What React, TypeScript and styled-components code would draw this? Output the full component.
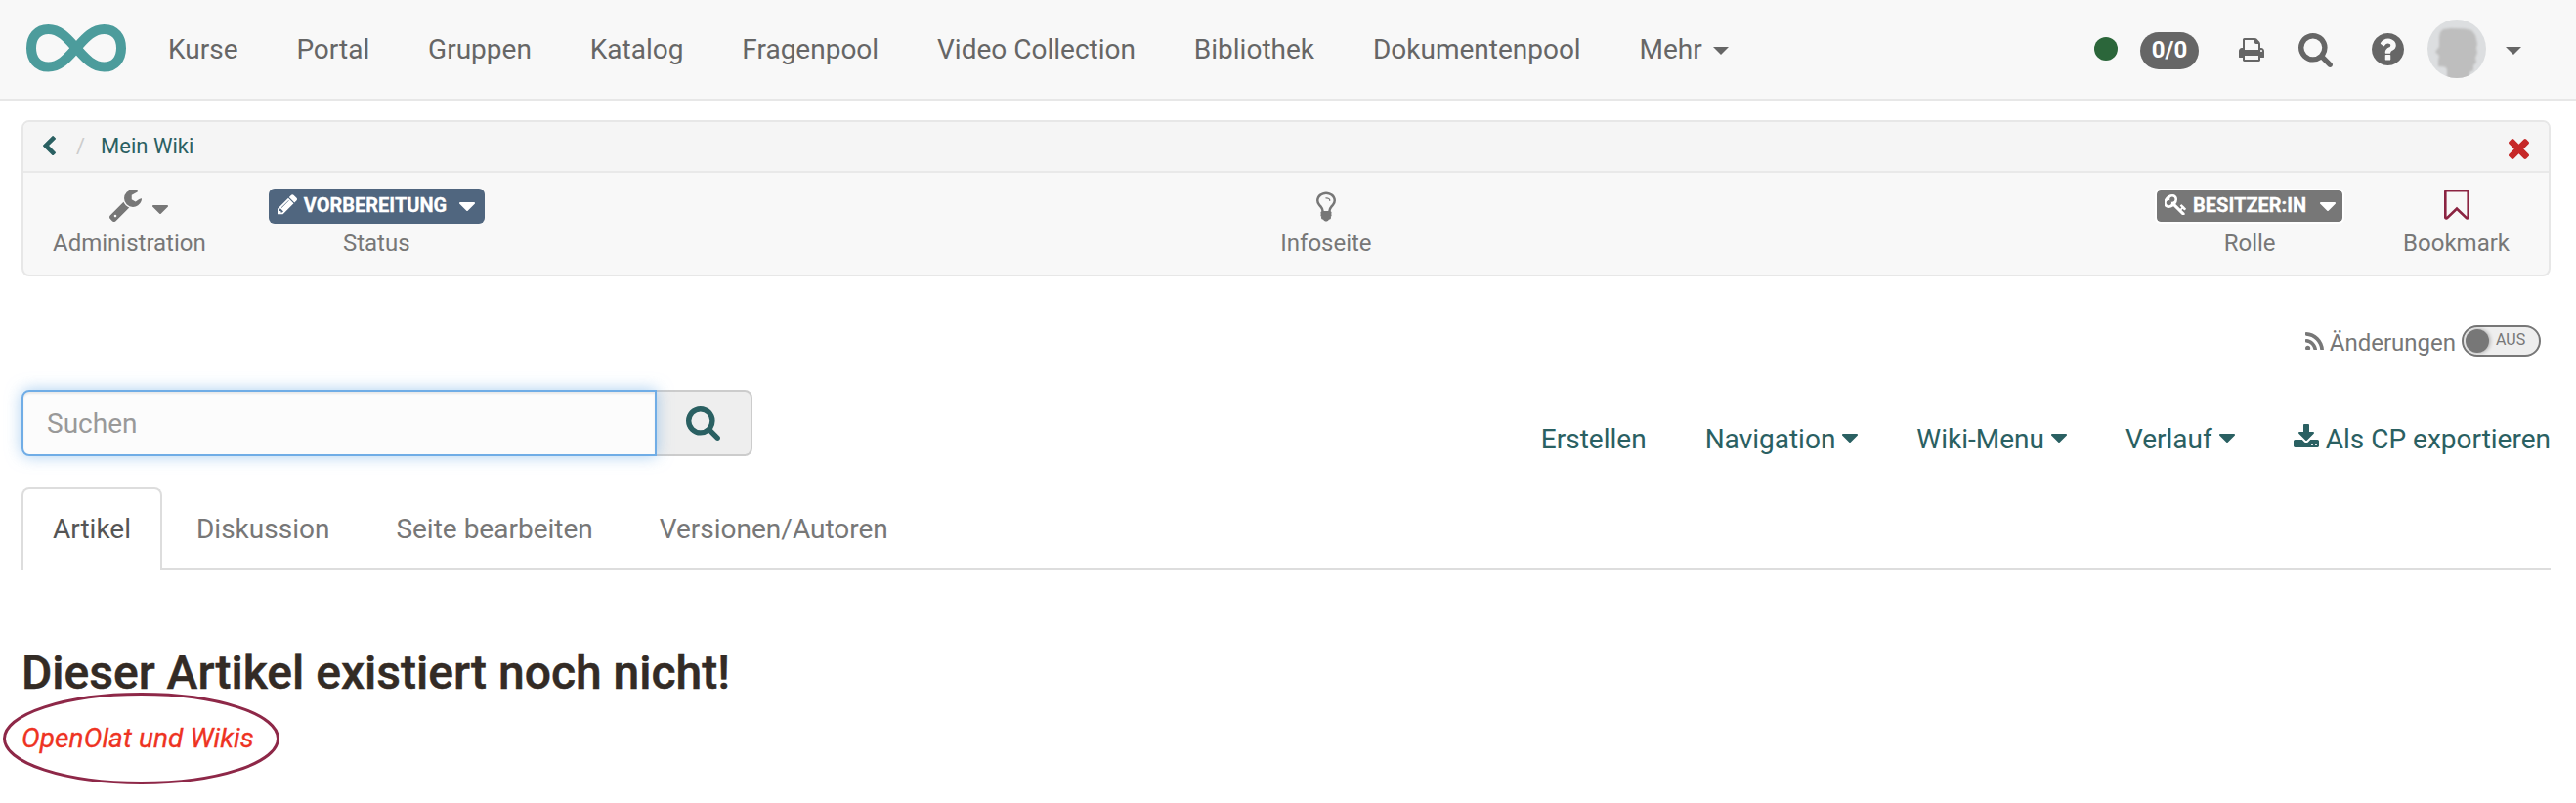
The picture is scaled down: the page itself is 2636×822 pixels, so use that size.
import React from 'react';
import styled, { createGlobalStyle } from 'styled-components';

const Global = createGlobalStyle`
  * { box-sizing: border-box; }
  body { margin: 0; background: #fff; font-family: Roboto, "Liberation Sans", sans-serif; }
`;

const PATHS = {
  search: 'M1216 832q0-185-131.5-316.5t-316.5-131.5-316.5 131.5-131.5 316.5 131.5 316.5 316.5 131.5 316.5-131.5 131.5-316.5zm512 832q0 52-38 90t-90 38q-54 0-90-38l-343-342q-179 124-399 124-143 0-273.5-55.5t-225-150-150-225-55.5-273.5 55.5-273.5 150-225 225-150 273.5-55.5 273.5 55.5 225 150 150 225 55.5 273.5q0 220-124 399l343 343q37 37 37 90z',
  help: 'M1024 1376v-192q0-14-9-23t-23-9h-192q-14 0-23 9t-9 23v192q0 14 9 23t23 9h192q14 0 23-9t9-23zm256-672q0-88-55.5-163t-138.5-116-170-41q-243 0-371 213-15 24 8 42l132 100q7 6 19 6 16 0 25-12 53-68 86-92 34-24 86-24 48 0 85.5 26t37.5 59q0 38-20 61t-68 45q-63 28-115.5 86.5t-52.5 125.5v36q0 14 9 23t23 9h192q14 0 23-9t9-23q0-19 21.5-49.5t54.5-49.5q32-18 49-28.5t46-35 44.5-48 28-60.5 12.5-81zm384 192q0 209-103 385.5t-279.5 279.5-385.5 103-385.5-103-279.5-279.5-103-385.5 103-385.5 279.5-279.5 385.5-103 385.5 103 279.5 279.5 103 385.5z',
  print: 'M448 1536h896v-256h-896v256zm0-640h896v-384h-160q-40 0-68-28t-28-68v-160h-640v640zm1152 64q0-26-19-45t-45-19-45 19-19 45 19 45 45 19 45-19 19-45zm128 0v416q0 13-9.5 22.5t-22.5 9.5h-224v160q0 40-28 68t-68 28h-960q-40 0-68-28t-28-68v-160h-224q-13 0-22.5-9.5t-9.5-22.5v-416q0-79 56.5-135.5t135.5-56.5h64v-544q0-40 28-68t68-28h672q40 0 88 20t76 48l152 152q28 28 48 76t20 88v256h64q79 0 135.5 56.5t56.5 135.5z',
  times: 'M1490 1322q0 40-28 68l-136 136q-28 28-68 28t-68-28l-294-294-294 294q-28 28-68 28t-68-28l-136-136q-28-28-28-68t28-68l294-294-294-294q-28-28-28-68t28-68l136-136q28-28 68-28t68 28l294 294 294-294q28-28 68-28t68 28l136 136q28 28 28 68t-28 68l-294 294 294 294q28 28 28 68z',
  wrench: 'M448 1472q0-26-19-45t-45-19-45 19-19 45 19 45 45 19 45-19 19-45zm644-420l-682 682q-37 37-90 37-52 0-91-37l-106-108q-38-36-38-90 0-53 38-91l681-681q39 98 114.5 173.5t173.5 114.5zm634-435q0 39-23 106-47 134-164.5 217.5t-258.5 83.5q-185 0-316.5-131.5t-131.5-316.5 131.5-316.5 316.5-131.5q58 0 121.5 16.5t107.5 46.5q16 11 16 28t-16 28l-293 169v224l193 107q5-3 79-48.5t135.5-81 70.5-35.5q15 0 23.5 10t8.5 25z',
  pencil: 'M491 1536l91-91-235-235-91 91v107h128v128h107zm523-928q0-22-22-22-10 0-17 7l-542 542q-7 7-7 17 0 22 22 22 10 0 17-7l542-542q7-7 7-17zm-54-192l416 416-832 832h-416v-416zm683 96q0 53-37 90l-166 166-416-416 166-165q36-38 90-38 53 0 91 38l235 234q37 39 37 91z',
  key: 'M832 512q0-80-56-136t-136-56-136 56-56 136q0 42 19 83-41-19-83-19-80 0-136 56t-56 136 56 136 136 56 136-56 56-136q0-42-19-83 41 19 83 19 80 0 136-56t56-136zm851 704q0 17-49 66t-66 49q-9 0-28.5-16t-36.5-33-38.5-40-24.5-26l-96 96 220 220q28 28 28 68 0 42-39 81t-81 39q-40 0-68-28l-671-671q-176 131-365 131-163 0-265.5-102.5t-102.5-265.5q0-160 95-313t248-248 313-95q163 0 265.5 102.5t102.5 265.5q0 189-131 365l355 355 96-96q-3-3-26-24.5t-40-38.5-33-36.5-16-28.5q0-17 49-66t66-49q13 0 23 10 6 6 46 44.5t82 79.5 86.5 86 73 78 28.5 41z',
  bulb: 'M1120 576q0 13-9.5 22.5t-22.5 9.5-22.5-9.5-9.5-22.5q0-46-54-71t-106-25q-13 0-22.5-9.5t-9.5-22.5 9.5-22.5 22.5-9.5q50 0 99.5 16t87 54 37.5 90zm160 0q0-72-34.5-134t-90-101.5-123-62-136.5-22.5-136.5 22.5-123 62-90 101.5-34.5 134q0 101 68 180 10 11 30.5 33t30.5 33q128 153 141 298h228q13-145 141-298 10-11 30.5-33t30.5-33q68-79 68-180zm128 0q0 155-103 268-45 49-74.5 87t-59.5 95.5-34 107.5q47 28 47 82 0 37-25 64 25 27 25 64 0 52-45 81 13 23 13 47 0 46-31.5 71t-77.5 25q-20 44-60 70t-87 26-87-26-60-70q-46 0-77.5-25t-31.5-71q0-24 13-47-45-29-45-81 0-37 25-64-25-27-25-64 0-54 47-82-4-50-34-107.5t-59.5-95.5-74.5-87q-103-113-103-268 0-99 44.5-184.5t117-142 164-89 186.5-32.5 186.5 32.5 164 89 117 142 44.5 184.5z',
  bookmark: 'M1408 256h-1024v1242l423-406 89-85 89 85 423 406v-1242zm12-128q23 0 44 9 33 13 52.5 41t19.5 62v1289q0 34-19.5 62t-52.5 41q-19 8-44 8-48 0-83-32l-441-424-441 424q-36 33-83 33-23 0-44-9-33-13-52.5-41t-19.5-62v-1289q0-34 19.5-62t52.5-41q21-9 44-9h1048z',
  rss: 'M576 1344q0 80-56 136t-136 56-136-56-56-136 56-136 136-56 136 56 56 136zm512 123q2 28-17 48-18 21-47 21h-135q-25 0-43-16.5t-20-41.5q-22-229-184.5-391.5t-391.5-184.5q-25-2-41.5-20t-16.5-43v-135q0-29 21-47 17-17 43-17h5q160 13 306 80.5t259 181.5q114 113 181.5 259t80.5 306zm512 2q2 27-18 47-18 20-46 20h-143q-26 0-44.5-17.5t-19.5-42.5q-12-215-101-408.5t-231.5-336-336-231.5-408.5-102q-25-1-42.5-19.5t-17.5-43.5v-143q0-28 20-46 18-18 44-18h3q262 13 501.5 120t425.5 294q187 186 294 425.5t120 501.5z',
  download: 'M1344 1344q0-26-19-45t-45-19-45 19-19 45 19 45 45 19 45-19 19-45zm256 0q0-26-19-45t-45-19-45 19-19 45 19 45 45 19 45-19 19-45zm128-224v320q0 40-28 68t-68 28h-1472q-40 0-68-28t-28-68v-320q0-40 28-68t68-28h465l135 136q58 56 136 56t136-56l136-136h464q40 0 68 28t28 68zm-325-569q17 41-14 70l-448 448q-18 19-45 19t-45-19l-448-448q-31-29-14-70 17-39 59-39h256v-448q0-26 19-45t45-19h256q26 0 45 19t19 45v448h256q42 0 59 39z',
  back: 'M1427 301l-531 531 531 531q19 19 19 45t-19 45l-166 166q-19 19-45 19t-45-19l-742-742q-19-19-19-45t19-45l742-742q19-19 45-19t45 19l166 166q19 19 19 45t-19 45z',
  caret: 'M1408 704q0 26-19 45l-448 448q-19 19-45 19t-45-19l-448-448q-19-19-19-45t19-45 45-19h896q26 0 45 19t19 45z',
};

/* viewBox of each glyph, trimmed to its drawn bounds */
const BOXES: Record<keyof typeof PATHS, [number, number, number, number]> = {
  search: [64, 128, 1664, 1664],
  help: [128, 128, 1536, 1536],
  print: [64, 0, 1664, 1664],
  times: [302, 366, 1188, 1188],
  wrench: [85, 128, 1641, 1643],
  pencil: [128, 128, 1515, 1536],
  key: [64, 128, 1620, 1611],
  bulb: [384, 0, 1024, 1664],
  bookmark: [256, 128, 1280, 1512],
  rss: [192, 128, 1410, 1408],
  download: [64, 0, 1664, 1536],
  back: [410, 26, 1036, 1612],
  caret: [384, 640, 1024, 576],
};

const Svg = styled.svg`
  display: block;
  flex: none;
  fill: currentColor;
`;

const Icon = ({ name, w }: { name: keyof typeof PATHS; w: number }) => {
  const box = BOXES[name];
  return (
    <Svg width={w} height={(w * box[3]) / box[2]} viewBox={box.join(' ')}>
      <path d={PATHS[name]} />
    </Svg>
  );
};

const Page = styled.div`
  min-height: 822px;
`;

const Navbar = styled.header`
  height: 103px;
  display: flex;
  justify-content: space-between;
  background: #f8f8f8;
  border-bottom: 2px solid #e7e7e7;
`;

const NavLeft = styled.nav`
  display: flex;
  padding-left: 26px;
`;

const Logo = styled.svg`
  display: block;
  margin: 24px 42px 0 0;
`;

const NavLink = styled.a`
  display: flex;
  gap: 11px;
  height: 100px;
  align-items: center;
  margin-right: 59.9px;
  font-size: 28px;
  white-space: nowrap;
  color: #666;
`;

const Triangle = styled.span`
  width: 16px;
  margin-top: 4px;
  border-top: 8px solid currentColor;
  border-left: 8px solid transparent;
  border-right: 8px solid transparent;
`;

const IconSlot = styled.span<{ $y?: number; $color?: string }>`
  display: flex;
  padding-top: ${(p) => p.$y ?? 0}px;
  color: ${(p) => p.$color ?? 'inherit'};
`;

const NavTools = styled.div`
  display: flex;
  align-items: center;
  height: 100px;
  padding-right: 56px;
  color: #666;
`;

const StatusDot = styled.span`
  width: 24px;
  height: 24px;
  border-radius: 50%;
  background: #2b663a;
  margin-right: 23px;
`;

const CountBadge = styled.span`
  width: 60px;
  height: 38px;
  margin: 4px 41px 0 0;
  border-radius: 19px;
  background: #666;
  color: #fff;
  font-size: 24px;
  font-weight: 700;
  line-height: 37px;
  text-align: center;
`;

const Tool = styled.span<{ $gap: number; $y?: number }>`
  display: flex;
  padding-top: ${(p) => p.$y ?? 0}px;
  margin-right: ${(p) => p.$gap}px;
`;

const Content = styled.main`
  padding: 20px 26px 0 22px;
`;

const CoursePanel = styled.section`
  height: 160px;
  border: 2px solid #e7e7e7;
  border-radius: 8px;
  background: #f8f8f8;
  overflow: hidden;
`;

const Breadcrumb = styled.div`
  display: flex;
  align-items: center;
  height: 52px;
  padding: 0 20px 2px;
  background: #f5f5f5;
  border-bottom: 2px solid #e9e9e9;
  font-size: 22px;
  color: #2a6062;
`;

const Slash = styled.span`
  margin: 0 16px 0 21px;
  color: #ccc;
`;

const CloseButton = styled.button`
  display: flex;
  margin-left: auto;
  padding: 7px 0 0;
  border: 0;
  background: none;
  color: #c62828;
`;

const ToolRow = styled.div`
  display: grid;
  grid-template-columns: auto 1fr auto;
  padding: 16px 40px 0 30px;
`;

const ToolGroup = styled.div<{ $gap: number }>`
  display: flex;
  gap: ${(p) => p.$gap}px;
`;

const ToolItem = styled.div<{ $shift?: number }>`
  display: flex;
  flex-direction: column;
  align-items: center;
  padding-left: ${(p) => p.$shift ?? 0}px;
  color: #777;
`;

const ToolVisual = styled.div<{ $gap?: number; $shift?: number }>`
  display: flex;
  align-items: flex-start;
  gap: ${(p) => p.$gap ?? 0}px;
  height: 42px;
  padding-left: ${(p) => p.$shift ?? 0}px;
`;

const ToolLabel = styled.span`
  font-size: 24px;
  line-height: 28px;
`;

const Label = styled.span<{ $bg: string; $outlined?: boolean; $w: number }>`
  display: flex;
  align-items: center;
  width: ${(p) => p.$w}px;
  height: 36px;
  padding: ${(p) => (p.$outlined ? '0 7px 3px 8px' : '0 10px 3px 9px')};
  border: ${(p) => (p.$outlined ? '2px solid #fff' : '0')};
  border-radius: 6px;
  background: ${(p) => p.$bg};
  background-clip: padding-box;
  color: #fff;
  font-size: 20px;
  font-weight: 700;
  -webkit-text-stroke: 0.3px;
  white-space: nowrap;
`;

const LabelText = styled.span`
  margin: 0 auto 0 7px;
`;

const ChangesRow = styled.div`
  display: flex;
  align-items: center;
  justify-content: flex-end;
  height: 32px;
  margin-top: 50px;
  padding-right: 10px;
  font-size: 24px;
  color: #777;
`;

const ChangesText = styled.span`
  margin: 3px 6px 0;
`;

const Toggle = styled.span`
  display: flex;
  align-items: center;
  width: 81px;
  height: 32px;
  padding-left: 2px;
  border: 2px solid #777;
  border-radius: 16px;
  background: #eee;
  font-size: 16px;
`;

const Knob = styled.span`
  width: 24px;
  height: 24px;
  margin-right: 7px;
  border-radius: 50%;
  background: #777;
  box-shadow: 1px 0 4px rgba(0, 0, 0, 0.3);
`;

const ToggleText = styled.span`
  margin-bottom: 3px;
`;

const SearchRow = styled.div`
  display: flex;
  justify-content: space-between;
  height: 68px;
  margin-top: 34px;
`;

const SearchGroup = styled.div`
  display: flex;
`;

const SearchInput = styled.input`
  width: 650px;
  height: 68px;
  padding: 0 24px;
  border: 2px solid #70ade6;
  border-radius: 8px 0 0 8px;
  outline: none;
  background: #fcfcfc;
  box-shadow: inset 0 2px 2px rgba(0, 0, 0, 0.075), 0 0 16px rgba(112, 173, 230, 0.6);
  position: relative;
  z-index: 1;
  font-family: inherit;
  font-size: 28px;
  &::placeholder { color: #999; }
`;

const SearchButton = styled.button`
  display: flex;
  align-items: center;
  justify-content: center;
  width: 98px;
  height: 68px;
  padding: 1px 1px 0 0;
  border: 2px solid #ccc;
  border-left: 0;
  border-radius: 0 8px 8px 0;
  background: #eee;
  color: #2a6062;
`;

const WikiMenu = styled.nav`
  display: flex;
  gap: 60px;
  padding-top: 34px;
  font-size: 28px;
  line-height: 33px;
  color: #2a6062;
`;

const WikiLink = styled.a`
  display: flex;
  gap: 7px;
  white-space: nowrap;
`;

const Tabs = styled.div`
  display: flex;
  height: 84px;
  margin-top: 32px;
  border-bottom: 2px solid #ddd;
`;

const Tab = styled.a<{ $active?: boolean }>`
  height: ${(p) => (p.$active ? 84 : 82)}px;
  margin-right: ${(p) => (p.$active ? 3 : 4)}px;
  padding: 0 30px;
  border: 2px solid ${(p) => (p.$active ? '#ddd' : 'transparent')};
  border-bottom: 0;
  border-radius: 8px 8px 0 0;
  background: ${(p) => (p.$active ? '#fff' : 'transparent')};
  color: ${(p) => (p.$active ? '#555' : '#777')};
  font-size: 28px;
  line-height: 82px;
  white-space: nowrap;
`;

const Title = styled.h1`
  margin: 78px 0 0;
  font-size: 48px;
  font-weight: 500;
  line-height: 56px;
  color: #332b25;
  -webkit-text-stroke: 0.5px;
`;

const MissingPage = styled.div`
  position: relative;
  width: fit-content;
  margin-top: 22px;
  font-size: 28px;
  line-height: 33px;
  font-style: italic;
  letter-spacing: 0.08px;
  color: #ee3322;
  -webkit-text-stroke: 0.3px;
`;

const Ring = styled.svg`
  position: absolute;
  left: -20px;
  top: -31px;
`;

const NAV = ['Kurse', 'Portal', 'Gruppen', 'Katalog', 'Fragenpool', 'Video Collection', 'Bibliothek', 'Dokumentenpool'];
const TABS = ['Artikel', 'Diskussion', 'Seite bearbeiten', 'Versionen/Autoren'];
const MENUS = ['Navigation', 'Wiki-Menu', 'Verlauf'];

const Avatar = () => (
  <Svg width="60" height="60" viewBox="0 0 60 60">
    <defs>
      <clipPath id="round"><circle cx="30" cy="30" r="30" /></clipPath>
      <filter id="soft"><feGaussianBlur stdDeviation="0.9" /></filter>
    </defs>
    <circle cx="30" cy="30" r="30" fill="#dcdee0" />
    <g clipPath="url(#round)">
      <path
        d="M13 13L16 10 24 9 38 9.500 45 11 49 16 50 20 51 25 50 29 51 34 49 39 50 44 47 47 47 52 43 54 43 58 38 62H20V51L18 48.500 11 48V42L12 37 8 33 12 28V18Z"
        fill="#bebebe"
        filter="url(#soft)"
      />
    </g>
  </Svg>
);

export default function App() {
  return (
    <Page>
      <Global />
      <Navbar>
        <NavLeft>
          <Logo width="104" height="50" viewBox="0 0 104 50">
            <path
              d="M23.5 6C12 6 6 14.500 6 25.250S12 44.500 23.500 44.500C36 44.500 44 34 52 25.250S68 6 80.500 6C92 6 98 14.500 98 25.250S92 44.500 80.500 44.500C68 44.500 60 34 52 25.250S36 6 23.500 6Z"
              fill="none"
              stroke="#4c9c9c"
              strokeWidth="10"
            />
          </Logo>
          {NAV.map((n) => (
            <NavLink key={n}>{n}</NavLink>
          ))}
          <NavLink>
            Mehr <Triangle />
          </NavLink>
        </NavLeft>
        <NavTools>
          <StatusDot />
          <CountBadge>0/0</CountBadge>
          <Tool $gap={35}><Icon name="print" w={26} /></Tool>
          <Tool $gap={40} $y={3}><Icon name="search" w={35} /></Tool>
          <Tool $gap={24} $y={1}><Icon name="help" w={33} /></Tool>
          <Tool $gap={20}><Avatar /></Tool>
          <Triangle />
        </NavTools>
      </Navbar>

      <Content>
        <CoursePanel>
          <Breadcrumb>
            <Icon name="back" w={13} />
            <Slash>/</Slash>
            Mein Wiki
            <CloseButton aria-label="Schliessen"><Icon name="times" w={21} /></CloseButton>
          </Breadcrumb>
          <ToolRow>
            <ToolGroup $gap={64}>
              <ToolItem>
                <ToolVisual $gap={11} $shift={19}>
                  <IconSlot $y={1}><Icon name="wrench" w={33} /></IconSlot>
                  <IconSlot $y={17}><Icon name="caret" w={16} /></IconSlot>
                </ToolVisual>
                <ToolLabel>Administration</ToolLabel>
              </ToolItem>
              <ToolItem>
                <ToolVisual>
                  <Label $bg="#50667f" $w={221}>
                    <Icon name="pencil" w={20} />
                    <LabelText>VORBEREITUNG</LabelText>
                    <IconSlot $y={3}><Icon name="caret" w={16} /></IconSlot>
                  </Label>
                </ToolVisual>
                <ToolLabel>Status</ToolLabel>
              </ToolItem>
            </ToolGroup>
            <ToolItem $shift={13}>
              <ToolVisual><IconSlot $y={1}><Icon name="bulb" w={20} /></IconSlot></ToolVisual>
              <ToolLabel>Infoseite</ToolLabel>
            </ToolItem>
            <ToolGroup $gap={60}>
              <ToolItem>
                <ToolVisual>
                  <Label $bg="#777" $outlined $w={194}>
                    <Icon name="key" w={22} />
                    <LabelText>BESITZER:IN</LabelText>
                    <IconSlot $y={3}><Icon name="caret" w={16} /></IconSlot>
                  </Label>
                </ToolVisual>
                <ToolLabel>Rolle</ToolLabel>
              </ToolItem>
              <ToolItem>
                <ToolVisual><IconSlot $y={1} $color="#8b2442"><Icon name="bookmark" w={26} /></IconSlot></ToolVisual>
                <ToolLabel>Bookmark</ToolLabel>
              </ToolItem>
            </ToolGroup>
          </ToolRow>
        </CoursePanel>

        <ChangesRow>
          <Icon name="rss" w={19} />
          <ChangesText>Änderungen</ChangesText>
          <Toggle>
            <Knob />
            <ToggleText>AUS</ToggleText>
          </Toggle>
        </ChangesRow>

        <SearchRow>
          <SearchGroup>
            <SearchInput placeholder="Suchen" />
            <SearchButton aria-label="Suchen"><Icon name="search" w={35} /></SearchButton>
          </SearchGroup>
          <WikiMenu>
            <WikiLink>Erstellen</WikiLink>
            {MENUS.map((m) => (
              <WikiLink key={m}>
                {m}
                <IconSlot $y={11}><Icon name="caret" w={16} /></IconSlot>
              </WikiLink>
            ))}
            <WikiLink>
              <IconSlot $y={1}><Icon name="download" w={26} /></IconSlot>
              Als CP exportieren
            </WikiLink>
          </WikiMenu>
        </SearchRow>

        <Tabs>
          {TABS.map((t, i) => (
            <Tab key={t} $active={i === 0}>{t}</Tab>
          ))}
        </Tabs>

        <Title>Dieser Artikel existiert noch nicht!</Title>
        <MissingPage>
          OpenOlat und Wikis
          <Ring width="286" height="98" viewBox="0 0 286 98">
            <ellipse cx="142.500" cy="48" rx="140" ry="45.500" fill="none" stroke="#8e2848" strokeWidth="3" />
          </Ring>
        </MissingPage>
      </Content>
    </Page>
  );
}
